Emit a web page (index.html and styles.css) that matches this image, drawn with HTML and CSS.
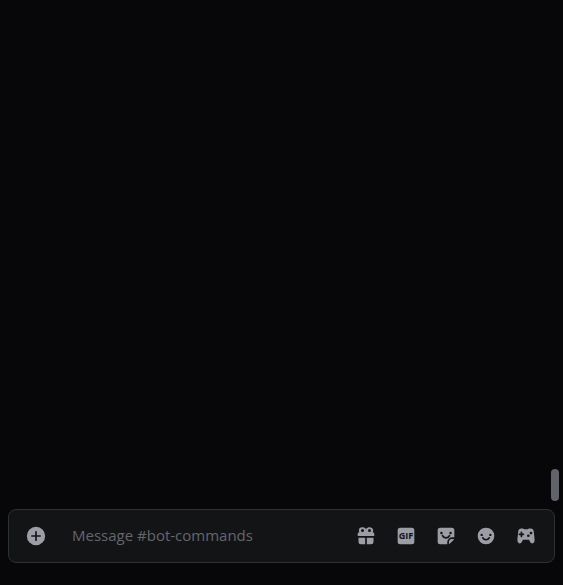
FILE: index.html
```html
<!DOCTYPE html>
<html lang="en">
<head>
<meta charset="utf-8">
<title>#bot-commands</title>
<link rel="stylesheet" href="styles.css">
</head>
<body>
<main class="messages" aria-label="Messages">
  <div class="scroll-thumb"></div>
</main>
<form class="composer">
  <button class="icon-button" type="button" aria-label="Add attachment">
    <svg viewBox="0 0 24 24"><path fill-rule="evenodd" d="M12 23a11 11 0 1 0 0-22 11 11 0 0 0 0 22Zm0-17a1 1 0 0 1 1 1v4h4a1 1 0 1 1 0 2h-4v4a1 1 0 1 1-2 0v-4H7a1 1 0 1 1 0-2h4V7a1 1 0 0 1 1-1Z"/></svg>
  </button>
  <input class="message-input" type="text" aria-label="Message #bot-commands" placeholder="Message #bot-commands">
  <div class="actions">
    <button class="icon-button" type="button" aria-label="Send a gift">
      <svg viewBox="0 0 24 24"><path fill-rule="evenodd" d="M3.500 5.500A4 4 0 0 1 7.500 1.500c2 0 3.600.8 4.500 2.300.9-1.500 2.500-2.300 4.500-2.300a4 4 0 0 1 3.600 6H20a2 2 0 0 1 2 2V11a1 1 0 0 1-1 1H3a1 1 0 0 1-1-1V9.500c0-1.100.9-2 2-2h-.1c-.3-.6-.4-1.300-.4-2ZM7.800 3.500a1.800 1.800 0 1 0 0 3.600 1.800 1.800 0 0 0 0-3.600Zm8.400 0a1.800 1.800 0 1 0 0 3.600 1.800 1.800 0 0 0 0-3.600ZM3 14h8v8H6a3 3 0 0 1-3-3v-5Zm10 0h8v5a3 3 0 0 1-3 3h-5v-8Z"/></svg>
    </button>
    <button class="icon-button" type="button" aria-label="Open GIF picker">
      <svg viewBox="0 0 24 24"><rect x="2" y="2" width="20" height="20" rx="3"/><text class="gif-label" x="12" y="16" text-anchor="middle">GIF</text></svg>
    </button>
    <button class="icon-button" type="button" aria-label="Open sticker picker">
      <svg viewBox="0 0 24 24"><path d="M5 2h14a3 3 0 0 1 3 3v8.500h-2.500a6 6 0 0 0-6 6V22H5a3 3 0 0 1-3-3V5a3 3 0 0 1 3-3Z"/><path d="M15.500 21.500v-2a4 4 0 0 1 4-4h2c0 .6-.3 1.100-.7 1.500L17 20.800c-.4.4-.9.700-1.500.7Z"/><circle class="cutout" cx="6.500" cy="8.500" r="1.500"/><circle class="cutout" cx="17.500" cy="8.500" r="1.500"/><path class="smile" d="M7.800 11.500c1.600 3.600 6.800 3.600 8.400 0"/></svg>
    </button>
    <button class="icon-button" type="button" aria-label="Select emoji">
      <svg viewBox="0 0 24 24"><circle cx="12" cy="12" r="10"/><circle class="cutout" cx="6.800" cy="10.700" r="1.400"/><circle class="cutout" cx="17.200" cy="10.700" r="1.400"/><path class="smile" d="M8.200 14.200c1.600 3 6 3 7.600 0"/></svg>
    </button>
    <button class="icon-button" type="button" aria-label="Apps">
      <svg viewBox="0 0 24 24"><path d="M6.500 3H8c.8 0 1.300.5 1.700 1h4.600c.4-.5.9-1 1.700-1h1.500c2.300 0 3.500 1.300 3.800 3.500L22.300 16c.2 2.800-.8 5-2.700 5-1.500 0-2.400-1.200-3.200-3l-.7-1.600H8.300L7.600 18c-.8 1.800-1.700 3-3.200 3-1.900 0-2.900-2.200-2.700-5l1-9.500C3 4.300 4.200 3 6.500 3Z"/><path class="pad" d="M6.500 7.500v5M4 10h5"/><circle class="cutout" cx="18" cy="8.500" r="1.600"/><circle class="cutout" cx="14.800" cy="11.700" r="1.600"/></svg>
    </button>
  </div>
</form>
</body>
</html>
```
FILE: styles.css
```css
* {
  box-sizing: border-box;
}

body {
  display: flex;
  flex-direction: column;
  min-height: 100vh;
  margin: 0;
  background: #070709;
  font-family: "Open Sans", "Noto Sans", sans-serif;
}

.messages {
  display: flex;
  flex: 1;
  align-items: flex-end;
  justify-content: flex-end;
  padding: 0 4px 8px;
}

.scroll-thumb {
  width: 8px;
  height: 32px;
  border-radius: 4px;
  background: #62626b;
}

.composer {
  display: flex;
  align-items: center;
  height: 54px;
  margin: 0 8px 22px;
  padding: 0 12px 0 11px;
  border: 1px solid #2f3033;
  border-radius: 8px;
  background: #131416;
}

.icon-button {
  display: grid;
  flex: none;
  place-items: center;
  width: 32px;
  height: 32px;
  padding: 0;
  border: 0;
  background: none;
}

.icon-button svg {
  width: 20px;
  height: 20px;
  fill: #9c9da5;
}

.icon-button .cutout {
  fill: #131416;
}

.smile,
.pad {
  fill: none;
  stroke: #131416;
  stroke-width: 2;
  stroke-linecap: round;
}

.icon-button .gif-label {
  fill: #131416;
  font: 700 11px "Open Sans", sans-serif;
}

.message-input {
  flex: 1;
  min-width: 0;
  height: 32px;
  margin-left: 20px;
  padding: 0 0 2px;
  border: 0;
  outline: 0;
  background: none;
  color: #dfe0e2;
  font: 15px "Open Sans", "Noto Sans", sans-serif;
}

.message-input::placeholder {
  color: #65666d;
  opacity: 1;
}

.actions {
  display: flex;
  gap: 8px;
}
```
